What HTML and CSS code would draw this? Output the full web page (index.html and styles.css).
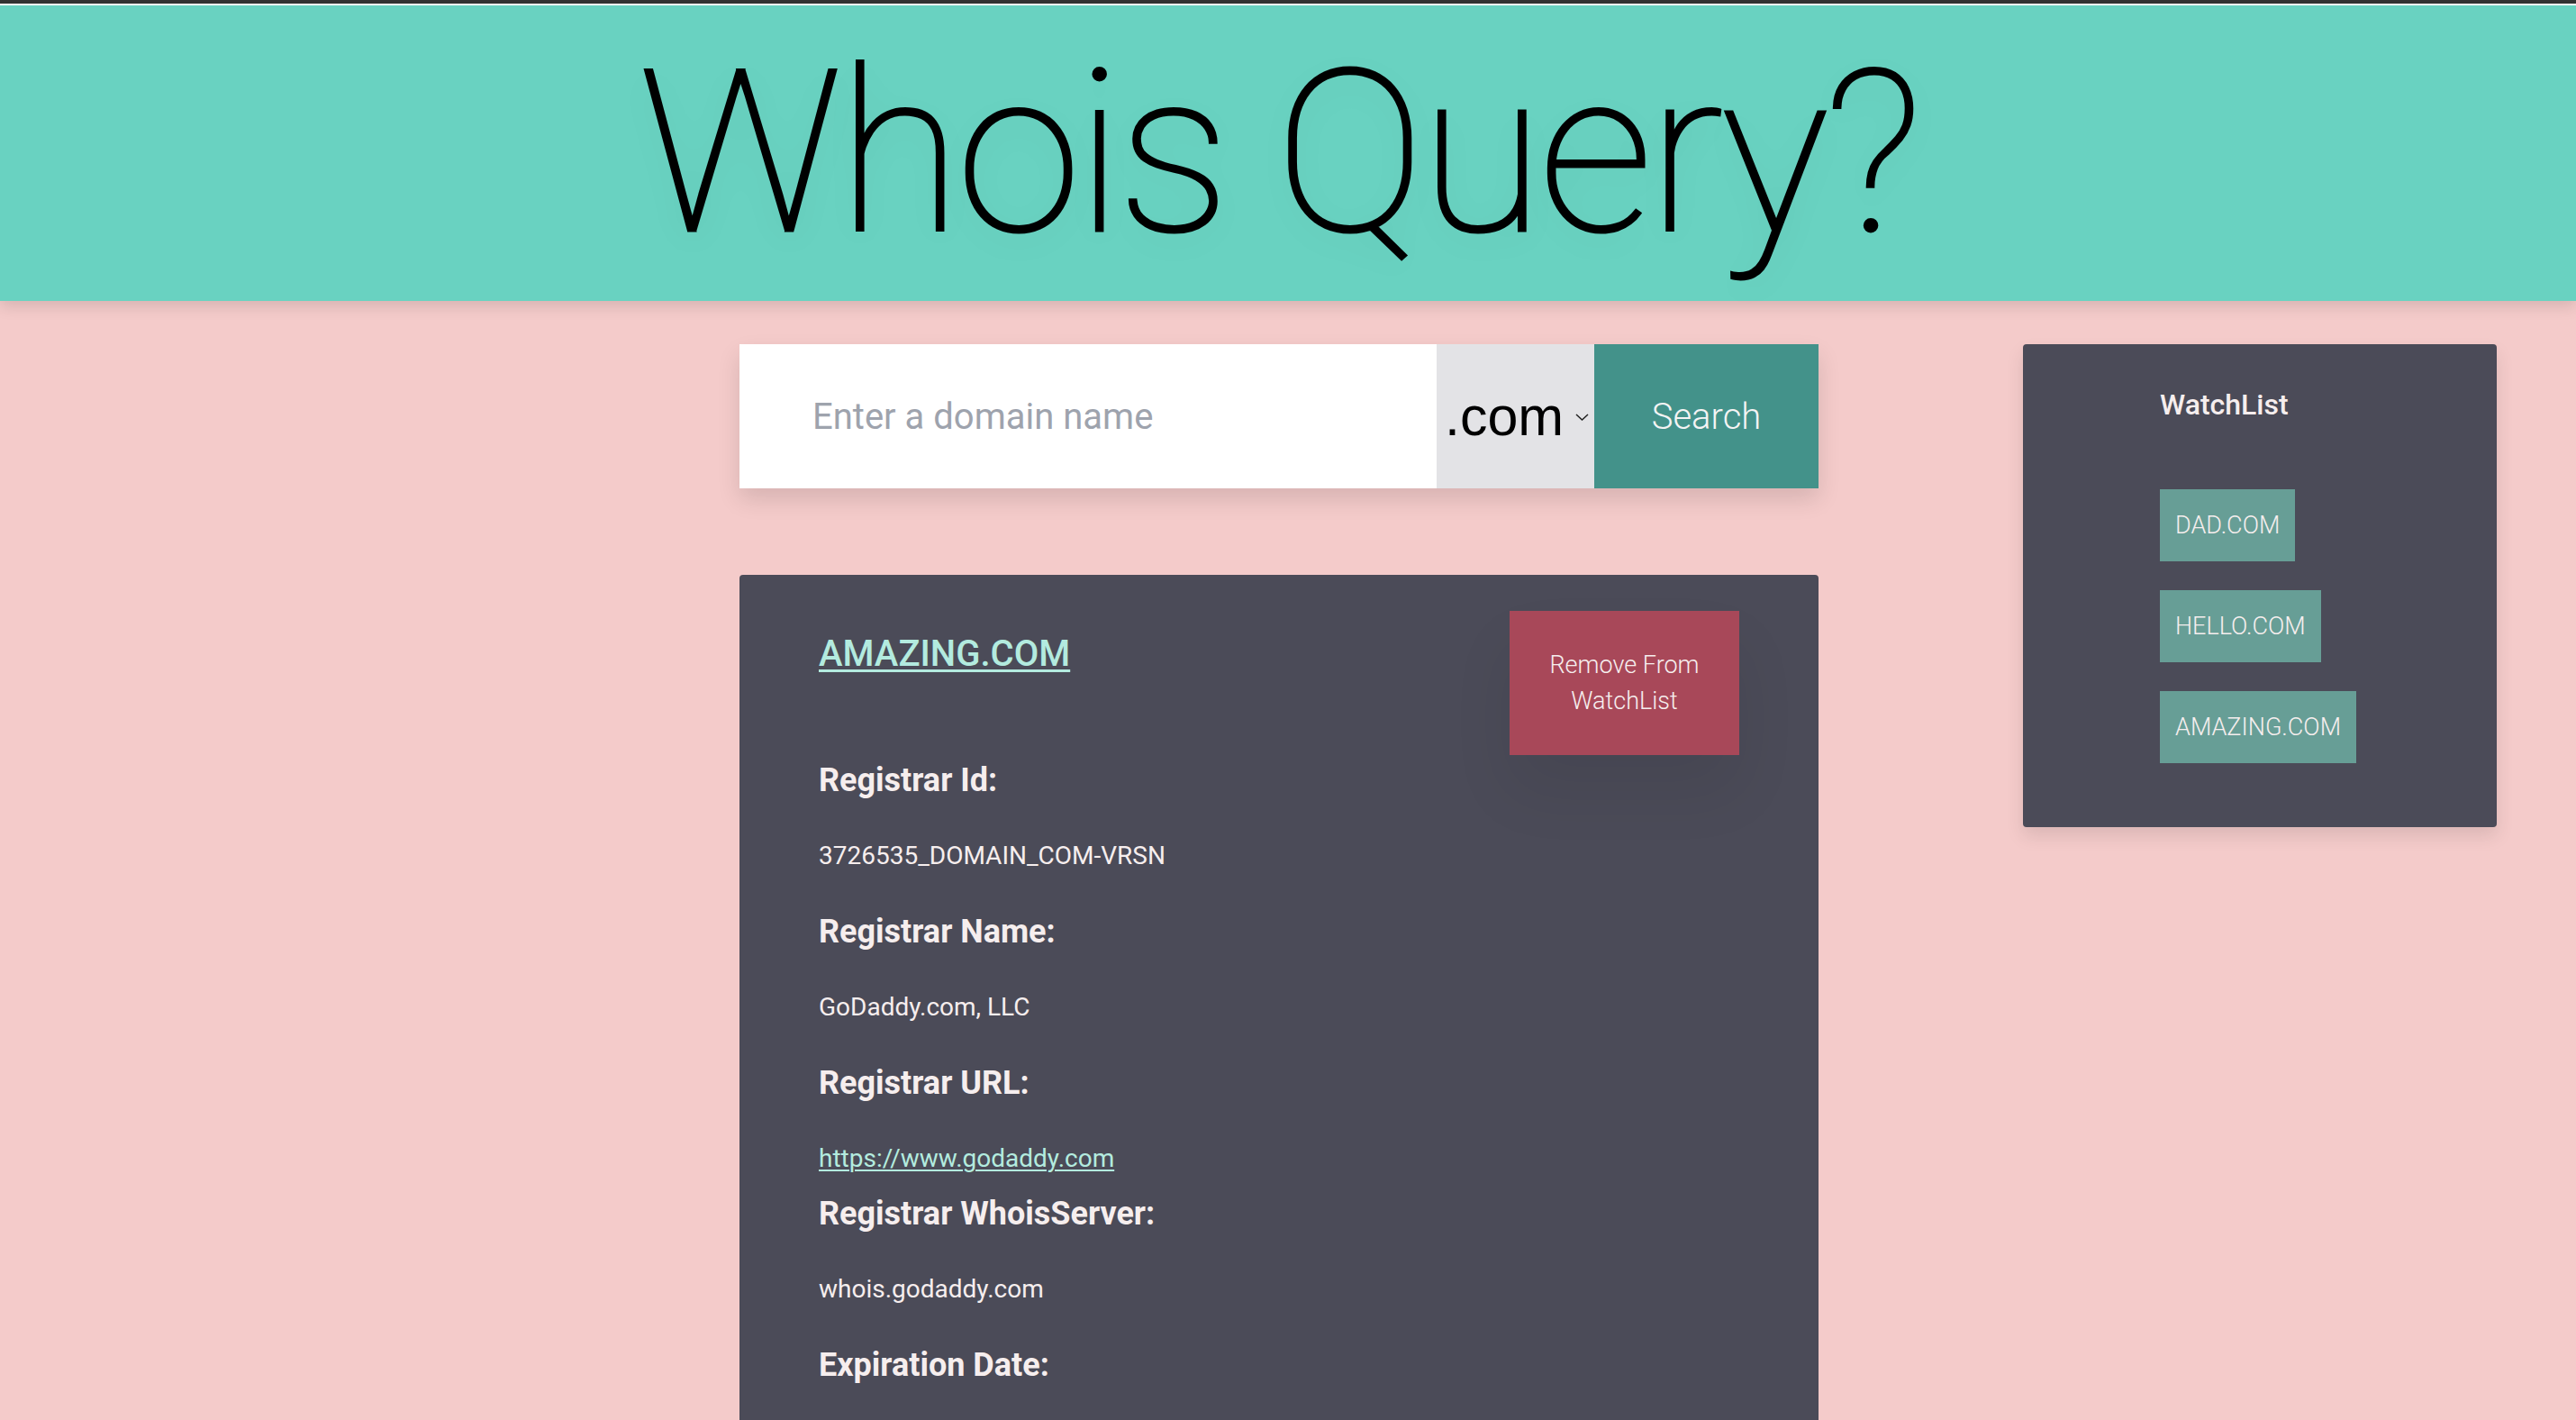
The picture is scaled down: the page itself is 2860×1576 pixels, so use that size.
FILE: index.html
```html
<!DOCTYPE html>
<html lang="en">
<head>
<meta charset="utf-8">
<title>Whois Query?</title>
<link rel="stylesheet" href="styles.css">
</head>
<body>
<div class="topbar"></div>
<header class="hero">
  <h1 class="hero-title">Whois Query?</h1>
</header>
<div class="layout">
  <main class="main-col">
    <form class="search">
      <input class="search-input" type="text" placeholder="Enter a domain name">
      <div class="tld">
        <span>.com</span>
        <svg class="chev" width="15" height="8" viewBox="0 0 15 8"><path d="M1 1 L7.5 7 L14 1" fill="none" stroke="#222" stroke-width="1.5"/></svg>
      </div>
      <button class="search-btn" type="button">Search</button>
    </form>
    <section class="result">
      <div class="result-head">
        <a class="domain-link" href="#">AMAZING.COM</a>
        <button class="remove-btn" type="button">Remove From<br>WatchList</button>
      </div>
      <div class="details">
        <h3 class="label">Registrar Id:</h3>
        <p class="value">3726535_DOMAIN_COM-VRSN</p>
        <h3 class="label">Registrar Name:</h3>
        <p class="value">GoDaddy.com, LLC</p>
        <h3 class="label">Registrar URL:</h3>
        <a class="url" href="#">https://www.godaddy.com</a>
        <h3 class="label">Registrar WhoisServer:</h3>
        <p class="value">whois.godaddy.com</p>
        <h3 class="label">Expiration Date:</h3>
      </div>
    </section>
  </main>
  <aside class="watchlist">
    <h2 class="watch-title">WatchList</h2>
    <div class="watch-items">
      <button class="watch-item" type="button">DAD.COM</button>
      <button class="watch-item" type="button">HELLO.COM</button>
      <button class="watch-item" type="button">AMAZING.COM</button>
    </div>
  </aside>
</div>
</body>
</html>
```

FILE: styles.css
```css
* { box-sizing: border-box; }
html, body { margin: 0; padding: 0; }
body {
  background: #f4cbca;
  font-family: Roboto, "Liberation Sans", sans-serif;
  height: 1576px;
  overflow: hidden;
}

.topbar {
  height: 6px;
  background: #333333;
  border-bottom: 2px solid #ffffff;
}

.hero {
  position: relative;
  z-index: 1;
  height: 328px;
  background: #69d2c1;
  display: flex;
  align-items: center;
  justify-content: center;
  box-shadow: 0 6px 16px rgba(0, 0, 0, 0.12);
}
.hero-title {
  margin: 0 0 0 -22px;
  font-family: Roboto, "Liberation Sans", sans-serif;
  font-weight: 100;
  font-size: 250px;
  line-height: 293px;
  letter-spacing: -5px;
  color: #000;
  -webkit-text-stroke: 3px #000;
  text-shadow: 0 10px 40px rgba(0, 0, 0, 0.07);
}

.layout {
  display: grid;
  grid-template-columns: 821px 1198px 1fr;
  align-items: start;
  padding-top: 48px;
}
.main-col { grid-column: 2; }

.search {
  display: flex;
  height: 160px;
  margin: 0;
  box-shadow: 0 12px 24px rgba(0, 0, 0, 0.12);
}
.search-input {
  flex: 1;
  min-width: 0;
  border: 0;
  outline: none;
  background: #ffffff;
  padding: 0 0 0 81px;
  font-family: Roboto, sans-serif;
  font-size: 40px;
  color: #333;
}
.search-input::placeholder { color: #9ea3ad; }
.tld {
  width: 175px;
  background: #e3e3e6;
  display: flex;
  align-items: center;
  padding-left: 9px;
  gap: 13px;
  font-family: "Liberation Sans", Arial, sans-serif;
  font-size: 61px;
  color: #000;
}
.chev { margin-top: 2px; }
.search-btn {
  width: 249px;
  border: 0;
  background: #43928a;
  color: #f4f4f4;
  font-family: Roboto, sans-serif;
  font-weight: 300;
  font-size: 40px;
  padding: 0;
}

.result {
  margin-top: 96px;
  min-height: 1100px;
  background: #4b4b58;
  border-radius: 4px;
  padding: 40px 88px 80px;
  color: #f6eeee;
}
.result-head {
  display: flex;
  justify-content: space-between;
  align-items: flex-start;
}
.domain-link {
  margin-top: 24px;
  font-size: 40px;
  font-weight: 500;
  line-height: 47px;
  color: #b3ebdf;
  text-decoration: underline;
  text-decoration-thickness: 3px;
  text-underline-offset: 4px;
}
.remove-btn {
  width: 255px;
  height: 160px;
  padding: 0;
  border: 0;
  background: #a84859;
  color: #f6eeee;
  font-family: Roboto, sans-serif;
  font-weight: 300;
  font-size: 27px;
  line-height: 40px;
  box-shadow: 0 40px 70px rgba(0, 0, 0, 0.07);
}

.details { padding-top: 7px; }
.label {
  margin: 23px 0 46px;
  font-size: 36px;
  font-weight: 700;
  line-height: 42px;
}
.label:first-child { margin-top: 0; }
.value {
  margin: 46px 0;
  font-size: 28px;
  font-weight: 400;
  line-height: 34px;
}
.url {
  display: block;
  font-size: 28px;
  line-height: 34px;
  color: #b3ebdf;
  text-decoration: underline;
  text-decoration-thickness: 2px;
  text-underline-offset: 3px;
}

.watchlist {
  grid-column: 3;
  width: 526px;
  margin-left: 227px;
  background: #4b4b58;
  border-radius: 4px;
  padding: 49px 0 71px 152px;
  box-shadow: 0 10px 20px rgba(0, 0, 0, 0.1);
  color: #f6eeee;
}
.watch-title {
  margin: 0 0 74px;
  font-size: 32px;
  font-weight: 500;
  line-height: 37.5px;
}
.watch-items {
  display: flex;
  flex-direction: column;
  align-items: flex-start;
  gap: 32px;
}
.watch-item {
  height: 80px;
  padding: 0 17px;
  border: 0;
  background: #679e96;
  color: #f6eeee;
  font-family: Roboto, sans-serif;
  font-weight: 300;
  font-size: 27px;
}
```
